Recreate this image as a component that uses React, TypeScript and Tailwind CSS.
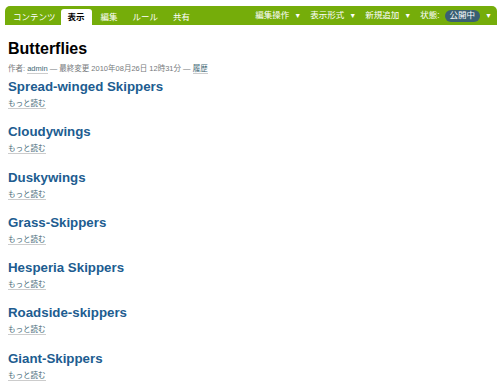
import React from "react";

const items = [
  "Spread-winged Skippers",
  "Cloudywings",
  "Duskywings",
  "Grass-Skippers",
  "Hesperia Skippers",
  "Roadside-skippers",
  "Giant-Skippers",
];

const font = { fontFamily: '"Liberation Sans", Arial, "Noto Sans CJK JP", sans-serif' };

function Arrow() {
  return <span className="ml-[5px] text-[7px]">▼</span>;
}

export default function App() {
  return (
    <div className="w-[500px] h-[387px] bg-white overflow-hidden" style={font}>
      <div className="pt-[6px] pl-[5px] pr-[3px]">
        <div className="h-[19px] bg-[#75ad0a] rounded-t-[5px] flex items-end justify-between text-white text-[8.5px] leading-none">
          <div className="flex items-end pl-[3px]">
            <span className="px-[5px] h-[16px] flex items-center">コンテンツ</span>
            <span className="px-[7px] h-[16px] flex items-center bg-white text-black font-bold rounded-t-[3px]">表示</span>
            <span className="ml-[4px] px-[5px] h-[16px] flex items-center">編集</span>
            <span className="ml-[5px] px-[5px] h-[16px] flex items-center">ルール</span>
            <span className="ml-[5px] px-[5px] h-[16px] flex items-center">共有</span>
          </div>
          <div className="flex items-center h-[19px] pr-[5px]">
            <span className="flex items-center">編集操作<Arrow /></span>
            <span className="ml-[9px] flex items-center">表示形式<Arrow /></span>
            <span className="ml-[9px] flex items-center">新規追加<Arrow /></span>
            <span className="ml-[9px] flex items-center">
              状態:
              <span className="ml-[5px] px-[5px] h-[12px] flex items-center bg-[#3a5f73] rounded-full">公開中</span>
              <Arrow />
            </span>
          </div>
        </div>
      </div>
      <div className="px-[8px]">
        <h1 className="mt-[14px] text-[16px] leading-[20px] font-bold text-black">Butterflies</h1>
        <div className="mt-[5px] text-[7.5px] leading-[10px] text-[#76797c]">
          作者: <span className="text-[#436976] border-b border-[#ccc]">admin</span> — 最終変更 2010年08月26日 12時31分 — <span className="text-[#436976] border-b border-[#ccc]">履歴</span>
        </div>
        <div className="mt-[4px]">
          {items.map((t) => (
            <div key={t} className="h-[45.3px]">
              <div className="text-[13.3px] leading-[18px] font-bold text-[#205c90]">{t}</div>
              <div className="mt-[3px] text-[7.5px] leading-[10px]">
                <span className="text-[#436976] border-b border-[#ccc]">もっと読む</span>
              </div>
            </div>
          ))}
        </div>
      </div>
    </div>
  );
}
